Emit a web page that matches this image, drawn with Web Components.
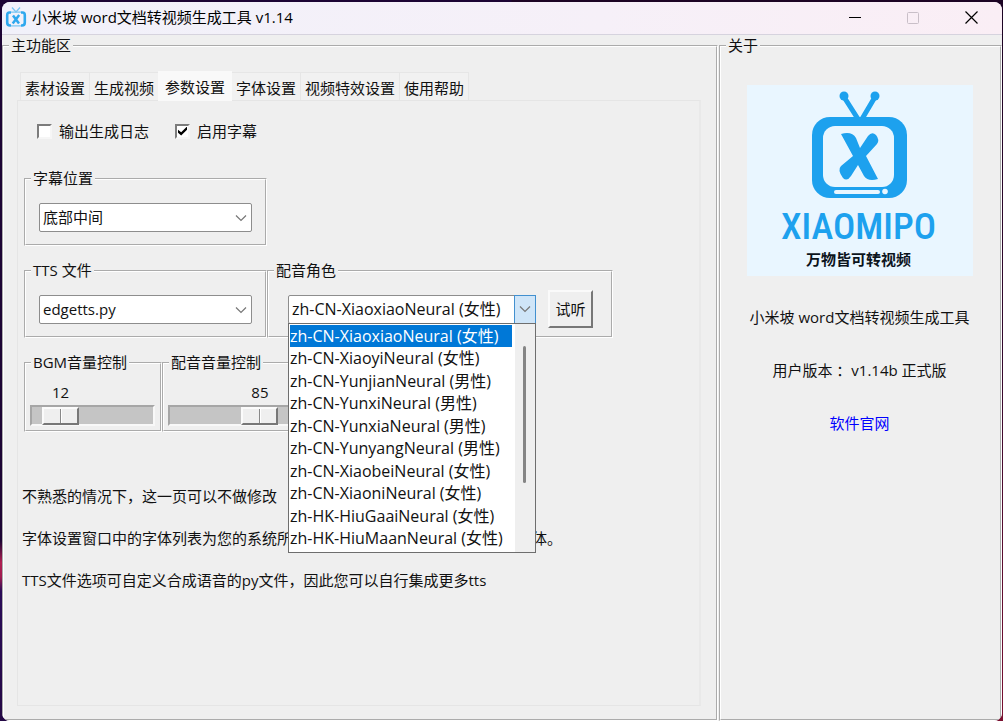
<!DOCTYPE html>
<html lang="zh-CN">
<head>
<meta charset="utf-8">
<title>小米坡 word文档转视频生成工具 v1.14</title>
<style>
html { font: 15px/20px "Open Sans", "Noto Sans CJK SC", sans-serif; color: #111; }
body { margin: 0; }
</style>
</head>
<body>
<xm-window heading="小米坡 word文档转视频生成工具 v1.14">
  <group-box heading="主功能区" class="main">
    <tab-book>
      <settings-page></settings-page>
    </tab-book>
  </group-box>
  <group-box heading="关于" class="about">
    <about-panel></about-panel>
  </group-box>
</xm-window>

<script>
function define(name, build, after) {
  customElements.define(name, class extends HTMLElement {
    constructor() {
      super();
      this.attachShadow({ mode: 'open' });
    }
    connectedCallback() {
      if (this.shadowRoot.firstChild) return;
      this.shadowRoot.innerHTML = '<style>*{box-sizing:border-box}</style>' + build(this);
      if (after) after(this);
    }
  });
}

/* The application window: title bar plus a two-column client area. */
define('xm-window', el => `
<style>
:host { display: flex; min-height: 100vh; box-sizing: border-box; padding: 2px 1px 0 2px;
  background:
    linear-gradient(#1c0434 0, #1c0434 75%, #b02052 78%, #a01c50 80%, #2a0c58 82%, #240845 100%) left / 51% 100% no-repeat,
    linear-gradient(#1c0424 0, #33082c 50%, #7a1030 100%) right / 50% 100% no-repeat; }
.win { flex: 1; display: flex; flex-direction: column; background: #efefef; border-radius: 8px; overflow: hidden; }
header { display: flex; align-items: center; height: 33px; padding: 0 2px 2px 0; border-bottom: 1px solid #d6d3de;
  background: linear-gradient(90deg, #f1f1fa, #f6f0f8 60%, #faeef5); color: #000; }
.icon { width: 22px; height: 22px; margin: 0 5px 0 3px; }
h1 { flex: 1; margin: 0; font-size: 15px; font-weight: 400; line-height: 20px; }
button { width: 58px; height: 30px; padding: 0; border: 0; background: none; display: grid; place-items: center; }
main { flex: 1; display: grid; grid-template-columns: 716fr 283fr; column-gap: 1px; padding-top: 1px; }
</style>
<div class="win">
  <header>
    <svg class="icon" viewBox="0 0 22 22" fill="none" stroke="#2fa8ee">
      <path d="M7 1.500l4 4.500 4-4.500" stroke-width="1.300" stroke="#7cc6f2"/>
      <path d="M6 6.500H4.500Q2.200 6.500 2.200 9v7.500Q2.200 19.500 5 19.500h1M16 6.500h1.500q2.300 0 2.300 2.500v7.500q0 3-2.800 3h-1" stroke-width="2.600"/>
      <path d="M6 6.200h10M6 19.800h10" stroke-width="1.200" stroke="#7cc6f2"/>
      <path d="M8 9.500l6 8M14.200 9l-6.500 8.600" stroke-width="2.500"/>
    </svg>
    <h1>${el.getAttribute('heading')}</h1>
    <button aria-label="最小化"><svg width="13" height="13"><path d="M0 6.500h12" stroke="#000"/></svg></button>
    <button aria-label="最大化" disabled><svg width="13" height="13"><rect x=".5" y="1.500" width="11" height="11" rx="1" fill="none" stroke="#c9bfc8"/></svg></button>
    <button aria-label="关闭"><svg width="13" height="13"><path d="M.5 .5l12 12M12.500 .5l-12 12" stroke="#000" stroke-width="1.200"/></svg></button>
  </header>
  <main><slot></slot></main>
</div>`);

/* A titled frame with an etched edge. */
define('group-box', el => `
<style>
:host { display: grid; min-width: 0; }
fieldset { display: grid; margin: 0; min-width: 0; padding: 0; border: 2px groove #fff; }
legend { margin-left: 5px; padding: 0 2px; height: 20px; line-height: 18px; white-space: nowrap; }
.body { min-width: 0; padding: var(--pad, 0); }
</style>
<fieldset><legend>${el.getAttribute('heading')}</legend><div class="body"><slot></slot></div></fieldset>`);

define('tab-book', () => {
  const tabs = ['素材设置', '生成视频', '参数设置', '字体设置', '视频特效设置', '使用帮助'];
  return `
<style>
:host { display: flex; flex-direction: column; height: 100%; box-sizing: border-box; padding: 15px 15px 13px 13px; }
nav { display: flex; align-items: flex-end; padding-left: 3px; }
button { font: inherit; color: inherit; height: 28px; margin: 0 -1px 0 0; padding: 2px 4px 0; border: 1px solid #e6e6e6;
  border-bottom: 0; background: #f1f1f1; white-space: nowrap; }
button[aria-selected=true] { position: relative; height: 30px; padding: 0 6px; margin-bottom: -1px; background: #f9f9f9; border-color: #f9f9f9; }
.pane { flex: 1; border: 1px solid #e5e5e5; border-right: 2px solid #e9e9e9; }
</style>
<nav role="tablist">${tabs.map(t => `<button role="tab" aria-selected="${t === '参数设置'}">${t}</button>`).join('')}</nav>
<div class="pane" role="tabpanel"><slot></slot></div>`;
});

define('check-option', el => `
<style>
:host { display: block; }
label { display: flex; align-items: center; gap: 7px; }
input { appearance: none; width: 15px; height: 15px; margin: 0; background: #fff; display: grid; place-items: center;
  border: 2px solid; border-color: #7c7c7c #f6f6f6 #f6f6f6 #7c7c7c; }
input:checked::before { content: ""; width: 9px; height: 9px; background: #000;
  clip-path: polygon(0 35%, 35% 65%, 100% 0, 100% 35%, 35% 100%, 0 70%); }
</style>
<label><input type="checkbox" ${el.hasAttribute('checked') ? 'checked' : ''}><span><slot></slot></span></label>`);

/* Drop-down; with "open" set its list of choices hangs below the field. */
define('combo-box', el => {
  const choices = el.getAttribute('choices').split('|');
  const open = el.hasAttribute('open');
  return `
<style>
:host { display: block; position: relative; flex: 1; min-width: 0; }
:host([open]) { font-size: 16px; }
.field { display: grid; grid-template-columns: 1fr 20px; height: 29px; border: 1px solid #8d8d8d; border-radius: 2px; background: #fff; }
select { grid-area: 1 / 1 / 2 / 3; width: 100%; appearance: none; margin: 0; padding: 0 20px 1px 3px; border: 0;
  background: none; font: inherit; color: inherit; outline: 0; }
.arrow { grid-area: 1 / 2; display: grid; place-items: center; pointer-events: none; }
.open .arrow { background: #cfe5f8; box-shadow: 0 0 0 1px #4290cf; }
.list { position: absolute; z-index: 5; top: 28px; left: 0; right: 0; display: grid; grid-template-columns: 1fr 20px;
  border: 1px solid #6e6e6e; background: #fff; }
ul { display: grid; grid-auto-rows: 1fr; height: 225px; margin: 1px 3px 2px 1px; padding: 0; list-style: none; }
li { display: flex; align-items: center; line-height: 20px; white-space: pre; }
li[aria-selected=true] { background: #0078d7; color: #fff; }
.bar { background: #efefef; padding: 22px 9px 0 8px; }
.bar i { display: block; height: 137px; border-radius: 2px; background: #858585; }
</style>
<div class="field ${open ? 'open' : ''}">
  <select aria-label="${el.getAttribute('label')}">${choices.map(c => `<option>${c}</option>`).join('')}</select>
  <span class="arrow"><svg width="12" height="8" fill="none" stroke="#777"><path d="M1 1.500l5 5 5-5" stroke-width="1.200"/></svg></span>
</div>
${open ? `<div class="list"><ul role="listbox">${choices.map((c, i) => `<li role="option" aria-selected="${i === 0}">${c}</li>`).join('')}</ul><div class="bar"><i></i></div></div>` : ''}`;
});

define('volume-slider', el => `
<style>
:host { display: block; padding-top: 9px; }
output { display: block; width: 37px; margin: 0 0 3px calc(2px + (100% - 41px) * var(--ratio)); text-align: center; }
input { appearance: none; display: block; width: 100%; height: 21px; margin: 0; background: #c5c5c5;
  border: 2px solid; border-color: #a6a6a6 #f8f8f8 #f8f8f8 #a6a6a6; }
input::-webkit-slider-thumb { appearance: none; width: 37px; height: 18px; border: 2px solid; border-color: #fbfbfb #777 #777 #fbfbfb;
  background: linear-gradient(90deg, transparent 16px, #888 16px, #888 17px, #fff 17px, #fff 18px, transparent 18px) #efefef; }
</style>
<output>${el.getAttribute('value')}</output>
<input type="range" min="0" max="100" value="${el.getAttribute('value')}" aria-label="${el.getAttribute('label')}">`,
  el => el.style.setProperty('--ratio', el.getAttribute('value') / 100));

define('settings-page', () => `
<style>
:host { display: block; padding: 20px 6px; }
.checks { display: flex; gap: 26px; padding-left: 13px; margin-bottom: 28px; }
.row { display: flex; margin-bottom: 15px; }
.wide { width: 243px; --pad: 14px 13px 12px; }
.voice { width: 346px; --pad: 9px 18px 8px 19px; }
.voice div { display: flex; align-items: center; gap: 12px; }
.level { width: 138px; --pad: 0 5px 4px 4px; }
.voice button { width: 45px; height: 38px; padding: 0; font: inherit; color: inherit; background: #efefef;
  border: 2px solid; border-color: #fafafa #777 #777 #fafafa; }
.notes { display: grid; row-gap: 22px; margin: 54px -2px 0; }
p { margin: 0; white-space: nowrap; }
.tail { padding-left: 240px; }
</style>
<div class="checks">
  <check-option>输出生成日志</check-option>
  <check-option checked>启用字幕</check-option>
</div>
<div class="row">
  <group-box class="wide" heading="字幕位置"><combo-box label="字幕位置" choices="底部中间"></combo-box></group-box>
</div>
<div class="row">
  <group-box class="wide" heading="TTS 文件"><combo-box label="TTS 文件" choices="edgetts.py"></combo-box></group-box>
  <group-box class="voice" heading="配音角色">
    <div>
      <combo-box open label="配音角色" choices="zh-CN-XiaoxiaoNeural (女性)|zh-CN-XiaoyiNeural (女性)|zh-CN-YunjianNeural (男性)|zh-CN-YunxiNeural (男性)|zh-CN-YunxiaNeural (男性)|zh-CN-YunyangNeural (男性)|zh-CN-XiaobeiNeural (女性)|zh-CN-XiaoniNeural (女性)|zh-HK-HiuGaaiNeural (女性)|zh-HK-HiuMaanNeural (女性)"></combo-box>
      <button>试听</button>
    </div>
  </group-box>
</div>
<div class="row">
  <group-box class="level" heading="BGM音量控制"><volume-slider label="BGM音量控制" value="12"></volume-slider></group-box>
  <group-box class="level" heading="配音音量控制"><volume-slider label="配音音量控制" value="85"></volume-slider></group-box>
</div>
<div class="notes">
  <p>不熟悉的情况下，这一页可以不做修改</p>
  <p>字体设置窗口中的字体列表为您的系统所<span class="tail">体。</span></p>
  <p>TTS文件选项可自定义合成语音的py文件，因此您可以自行集成更多tts</p>
</div>`);

define('brand-logo', () => `
<style>
:host { display: flex; flex-direction: column; align-items: center; width: 226px; height: 191px; box-sizing: border-box;
  padding: 5px 2px 0 0; background: #e9f6ff; }
svg { width: 98px; height: 110px; }
b { margin-top: 8px; font: 500 37px/38px "Roboto Condensed", Roboto, sans-serif; color: #1da1ee; }
strong { margin-top: 3px; color: #0c141c; font-weight: 700; line-height: 20px; }
</style>
<svg viewBox="0 0 98 110" aria-hidden="true">
  <g fill="none" stroke="#1da1ee" stroke-width="5"><path d="M34 7l14 22M65 7L52 29"/></g>
  <circle cx="34" cy="6" r="4.500" fill="#1da1ee"/><circle cx="65" cy="6" r="4.500" fill="#1da1ee"/>
  <rect x="2" y="27" width="95" height="81" rx="18" fill="#1da1ee"/>
  <rect x="13" y="36" width="71" height="61" rx="12" fill="#e9f6ff"/>
  <path d="M31 44Q42 41 46 48L50 58 58 46Q62 41 66 45 70 50 67 54L56 66 68 89Q58 92 54 86L48 75 41 86Q37 92 33 88 27 80 31 76L43 66Z" fill="#1da1ee"/>
  <rect x="24" y="100" width="46" height="4" rx="2" fill="#e9f6ff"/><circle cx="75" cy="101.500" r="2.800" fill="#e9f6ff"/>
</svg>
<b>XIAOMIPO</b>
<strong>万物皆可转视频</strong>`);

define('about-panel', () => `
<style>
:host { display: flex; flex-direction: column; align-items: center; padding: 29px 2px 0 0; }
p { margin: 0 0 33px; white-space: nowrap; }
brand-logo { margin-bottom: 31px; }
a { color: #00f; text-decoration: none; }
</style>
<brand-logo></brand-logo>
<p>小米坡 word文档转视频生成工具</p>
<p>用户版本 ：v1.14b 正式版</p>
<a href="#">软件官网</a>`);
</script>
</body>
</html>
